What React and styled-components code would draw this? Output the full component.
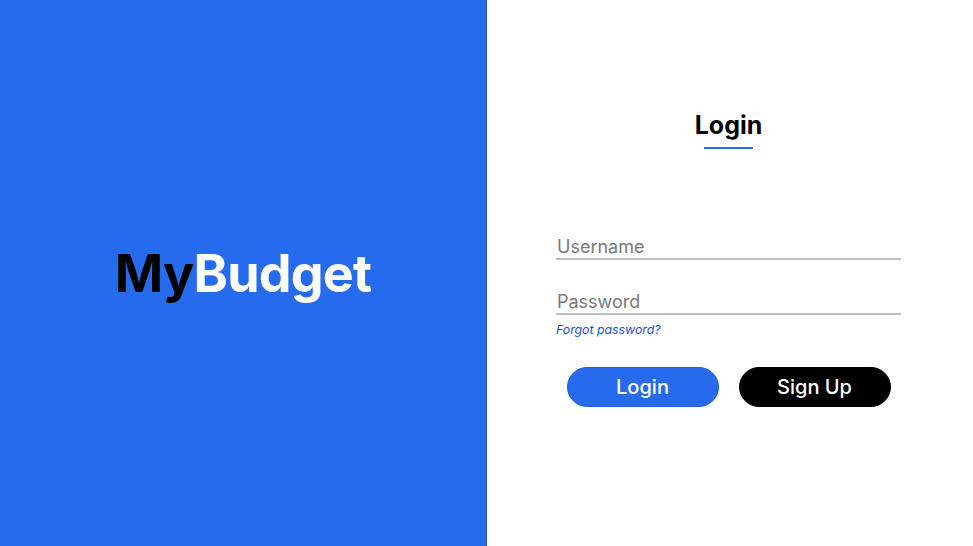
import React from 'react';
import styled, { createGlobalStyle } from 'styled-components';

const GlobalStyle = createGlobalStyle`
  * { box-sizing: border-box; }
  html, body { margin: 0; padding: 0; }
  body { font-family: Inter, "Noto Sans", sans-serif; background: #fff; }
`;

const Page = styled.div`
  display: grid;
  grid-template-columns: 487px 1fr;
  height: 100vh;
`;

const Brand = styled.div`
  background: #266bee;
  border-right: 1px solid #1f5fd6;
  display: flex;
  align-items: center;
  justify-content: center;
`;

const Logo = styled.h1`
  margin: 0;
  font-size: 52px;
  font-weight: 700;
  letter-spacing: -0.8px;
  color: #fff;
  span { color: #000; }
`;

const Panel = styled.div`
  display: flex;
  flex-direction: column;
  align-items: center;
  padding: 109px 3px 0 0;
`;

const Title = styled.h2`
  margin: 0;
  font-size: 25px;
  font-weight: 700;
  color: #000;
  line-height: 32px;
  &::after {
    content: '';
    display: block;
    width: 49px;
    height: 2px;
    background: #266bee;
    margin: 6px auto 0;
  }
`;

const Form = styled.form`
  width: 345px;
  margin-top: 87px;
  display: flex;
  flex-direction: column;
`;

const Field = styled.input`
  border: none;
  border-bottom: 2px solid #bdbdbd;
  outline: none;
  padding: 0 0 2px 1px;
  font-family: inherit;
  font-size: 18px;
  line-height: 20px;
  height: 24px;
  color: #333;
  background: transparent;
  margin-top: ${(p) => p.gap || 0}px;
  &::placeholder { color: #7a7a7a; }
`;

const Forgot = styled.a`
  margin-top: 7px;
  font-size: 12.3px;
  font-style: italic;
  color: #1a4fe0;
  text-decoration: none;
`;

const Buttons = styled.div`
  display: flex;
  justify-content: center;
  gap: 20px;
  margin-top: 30px;
`;

const Button = styled.button`
  width: 152px;
  height: 40px;
  border-radius: 20px;
  border: 1px solid ${(p) => (p.dark ? '#000' : '#1f5fd6')};
  background: ${(p) => (p.dark ? '#000' : '#266bee')};
  color: #fff;
  font-family: inherit;
  font-size: 20px;
  font-weight: 500;
  cursor: pointer;
`;

export default function App() {
  return (
    <>
      <GlobalStyle />
      <Page>
        <Brand>
          <Logo><span>My</span>Budget</Logo>
        </Brand>
        <Panel>
          <Title>Login</Title>
          <Form onSubmit={(e) => e.preventDefault()}>
            <Field type="text" placeholder="Username" />
            <Field type="password" placeholder="Password" gap={31} />
            <Forgot href="#">Forgot password?</Forgot>
            <Buttons>
              <Button type="submit">Login</Button>
              <Button type="button" dark>Sign Up</Button>
            </Buttons>
          </Form>
        </Panel>
      </Page>
    </>
  );
}
